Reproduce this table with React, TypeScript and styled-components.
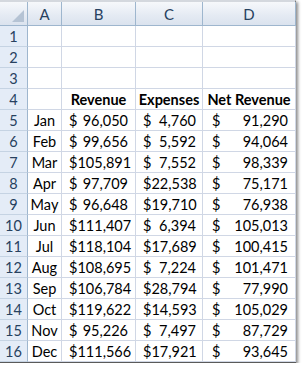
import React from "react";
import styled, { createGlobalStyle } from "styled-components";

const GlobalStyle = createGlobalStyle`
  html, body {
    margin: 0;
    padding: 0;
    background: #ffffff;
  }
`;

type Row = [string, number, number, number];

const rows: Row[] = [
  ["Jan", 96050, 4760, 91290],
  ["Feb", 99656, 5592, 94064],
  ["Mar", 105891, 7552, 98339],
  ["Apr", 97709, 22538, 75171],
  ["May", 96648, 19710, 76938],
  ["Jun", 111407, 6394, 105013],
  ["Jul", 118104, 17689, 100415],
  ["Aug", 108695, 7224, 101471],
  ["Sep", 106784, 28794, 77990],
  ["Oct", 119622, 14593, 105029],
  ["Nov", 95226, 7497, 87729],
  ["Dec", 111566, 17921, 93645],
];

const fmt = (n: number) => n.toLocaleString("en-US");

const App: React.FC = () => {
  return (
    <>
      <GlobalStyle />
      <Sheet>
        <Corner />
        {["A", "B", "C", "D"].map((c) => (
          <ColHead key={c}>{c}</ColHead>
        ))}
        {[1, 2, 3].map((n) => (
          <React.Fragment key={n}>
            <RowHead>{n}</RowHead>
            <Cell />
            <Cell />
            <Cell />
            <Cell />
          </React.Fragment>
        ))}
        <RowHead>4</RowHead>
        <Cell />
        <Cell $bold $center>Revenue</Cell>
        <Cell $bold $center>Expenses</Cell>
        <Cell $bold $center>Net Revenue</Cell>
        {rows.map(([m, rev, exp, net], i) => (
          <React.Fragment key={m}>
            <RowHead>{i + 5}</RowHead>
            <Cell $center>{m}</Cell>
            <Money $left={7} $right={7}>
              <span>$</span>
              <span>{fmt(rev)}</span>
            </Money>
            <Money $left={7} $right={6}>
              <span>$</span>
              <span>{fmt(exp)}</span>
            </Money>
            <Money $left={9} $right={7}>
              <span>$</span>
              <span>{fmt(net)}</span>
            </Money>
          </React.Fragment>
        ))}
      </Sheet>
    </>
  );
};

export default App;

const Sheet = styled.div`
  display: grid;
  grid-template-columns: 28px 34px 74px 67px 93px;
  grid-template-rows: 24px repeat(16, 21px);
  width: 296px;
  box-sizing: border-box;
  border-top: 2px solid #d4d8de;
  border-right: 1px solid #5a5a5a;
  border-bottom: 1px solid #5a5a5a;
  box-shadow: 2px 2px 3px rgba(0, 0, 0, 0.45);
  font-family: Lato, "Open Sans", sans-serif;
  font-size: 14.5px;
  color: #000;
`;

const headBg = `linear-gradient(#f6f8fb, #e4eaf3 60%, #dbe3ee)`;

const Corner = styled.div`
  position: relative;
  background: ${headBg};
  border-right: 1px solid #9eb6ce;
  border-bottom: 1px solid #9eb6ce;
  &:after {
    content: "";
    position: absolute;
    right: 3px;
    bottom: 3px;
    width: 0;
    height: 0;
    border-left: 12px solid transparent;
    border-bottom: 12px solid #b5c3d4;
  }
`;

const ColHead = styled.div`
  display: flex;
  align-items: center;
  justify-content: center;
  background: ${headBg};
  border-right: 1px solid #9eb6ce;
  border-bottom: 1px solid #9eb6ce;
  color: #27415f;
  font-size: 15px;
`;

const RowHead = styled.div`
  display: flex;
  align-items: center;
  justify-content: center;
  background: #e4ecf7;
  border-right: 1px solid #9eb6ce;
  border-bottom: 1px solid #c5d3e3;
  color: #27415f;
  font-size: 14.5px;
`;

const Cell = styled.div<{ $bold?: boolean; $center?: boolean }>`
  display: flex;
  align-items: center;
  justify-content: ${(p) => (p.$center ? "center" : "flex-start")};
  border-right: 1px solid #d0d7e5;
  border-bottom: 1px solid #d0d7e5;
  font-weight: ${(p) => (p.$bold ? 700 : 400)};
  white-space: nowrap;
  overflow: hidden;
`;

const Money = styled.div<{ $left: number; $right: number }>`
  display: flex;
  align-items: center;
  justify-content: space-between;
  padding: 0 ${(p) => p.$right}px 0 ${(p) => p.$left}px;
  border-right: 1px solid #d0d7e5;
  border-bottom: 1px solid #d0d7e5;
  white-space: nowrap;
`;
